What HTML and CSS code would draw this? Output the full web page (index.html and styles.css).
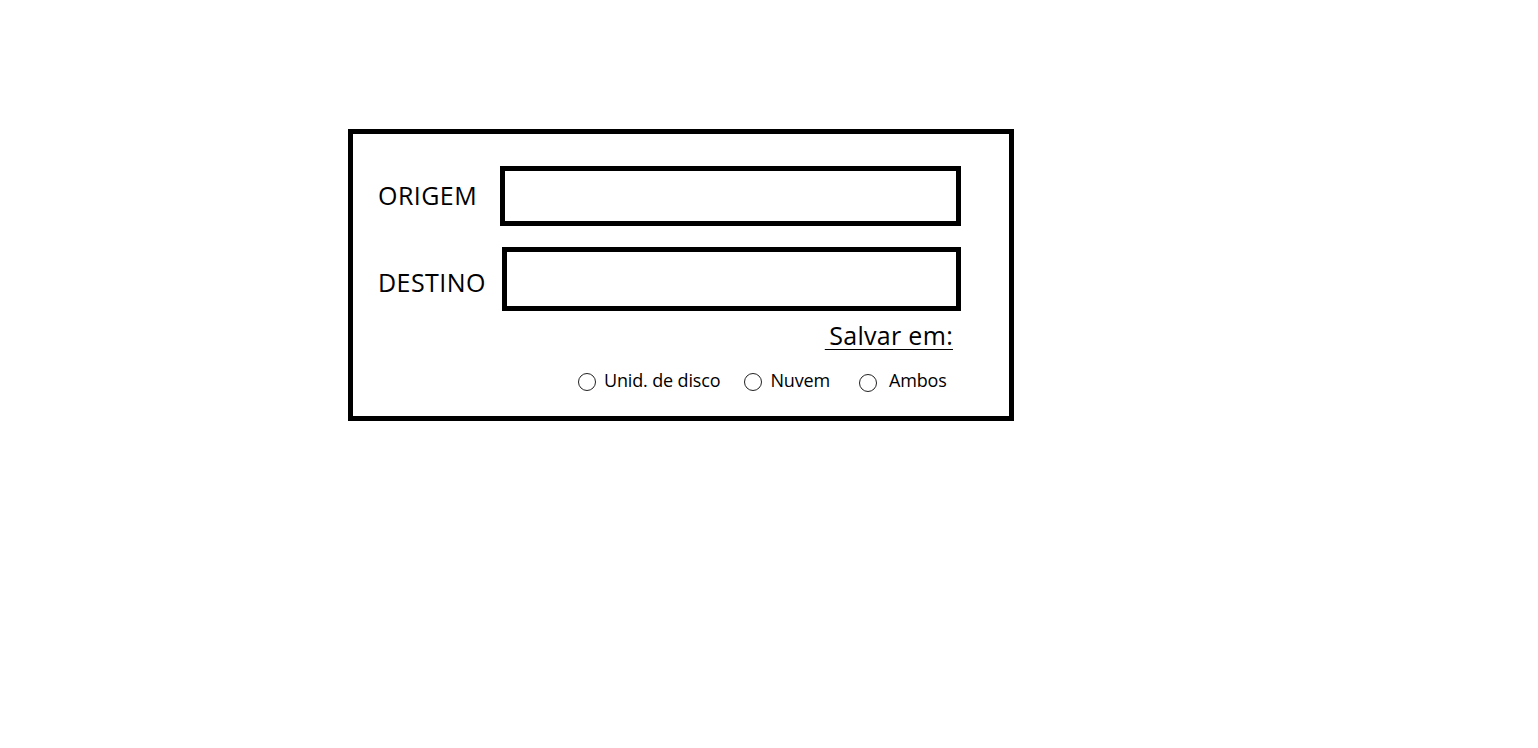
FILE: index.html
```html
<!DOCTYPE html>
<html lang="pt">
<head>
<meta charset="utf-8">
<title>Origem / Destino</title>
<link rel="stylesheet" href="styles.css">
</head>
<body>
<div class="panel">
  <div class="row row-origem">
    <label class="label">ORIGEM</label>
    <div class="field field-origem"></div>
  </div>
  <div class="row row-destino">
    <label class="label">DESTINO</label>
    <div class="field field-destino"></div>
  </div>
  <div class="save-title"><span>&#8201;Salvar em:</span></div>
  <div class="options">
    <div class="opt opt-disco"><span class="radio"></span><span>Unid. de disco</span></div>
    <div class="opt opt-nuvem"><span class="radio"></span><span>Nuvem</span></div>
    <div class="opt opt-ambos"><span class="radio"></span><span>Ambos</span></div>
  </div>
</div>
</body>
</html>
```
FILE: styles.css
```css
html, body {
  margin: 0;
  padding: 0;
  background: #fff;
}
body {
  font-family: "Open Sans", "Noto Sans", "Liberation Sans", sans-serif;
  color: #000;
}
.panel {
  box-sizing: border-box;
  margin: 129px 0 0 348px;
  width: 666px;
  height: 292px;
  border: 5px solid #000;
  padding: 32px 0 0 25px;
  display: flex;
  flex-direction: column;
}
.row {
  display: flex;
  align-items: center;
}
.label {
  font-size: 25px;
  letter-spacing: 0.45px;
  line-height: 1;
}
.field {
  box-sizing: border-box;
  border: 5px solid #000;
  background: #fff;
}
.row-origem .label { width: 122px; margin-top: -2px; }
.field-origem {
  width: 461px;
  height: 60px;
}
.row-destino {
  margin-top: 21px;
}
.row-destino .label { width: 124px; margin-top: 6px; }
.field-destino {
  width: 459px;
  height: 64px;
}
.save-title {
  display: flex;
  justify-content: flex-end;
  width: 575px;
  margin-top: 9px;
  font-size: 25px;
  line-height: 30px;
  letter-spacing: 0.3px;
}
.save-title span {
  text-decoration: underline;
  text-decoration-thickness: 1px;
  text-underline-offset: 4px;
  white-space: pre;
}
.options {
  display: flex;
  align-items: center;
  margin: 18px 0 0 200px;
  font-size: 18px;
  line-height: 22px;
  letter-spacing: -0.15px;
}
.opt {
  display: flex;
  align-items: center;
}
.radio {
  box-sizing: border-box;
  width: 18px;
  height: 18px;
  border: 1px solid #222;
  border-radius: 50%;
  margin-right: 8px;
  margin-top: 4px;
}
.opt-nuvem { margin-left: 24px; }
.opt-ambos { margin-left: 29px; }
.opt-ambos .radio { margin-right: 12px; margin-top: 6px; }
```
